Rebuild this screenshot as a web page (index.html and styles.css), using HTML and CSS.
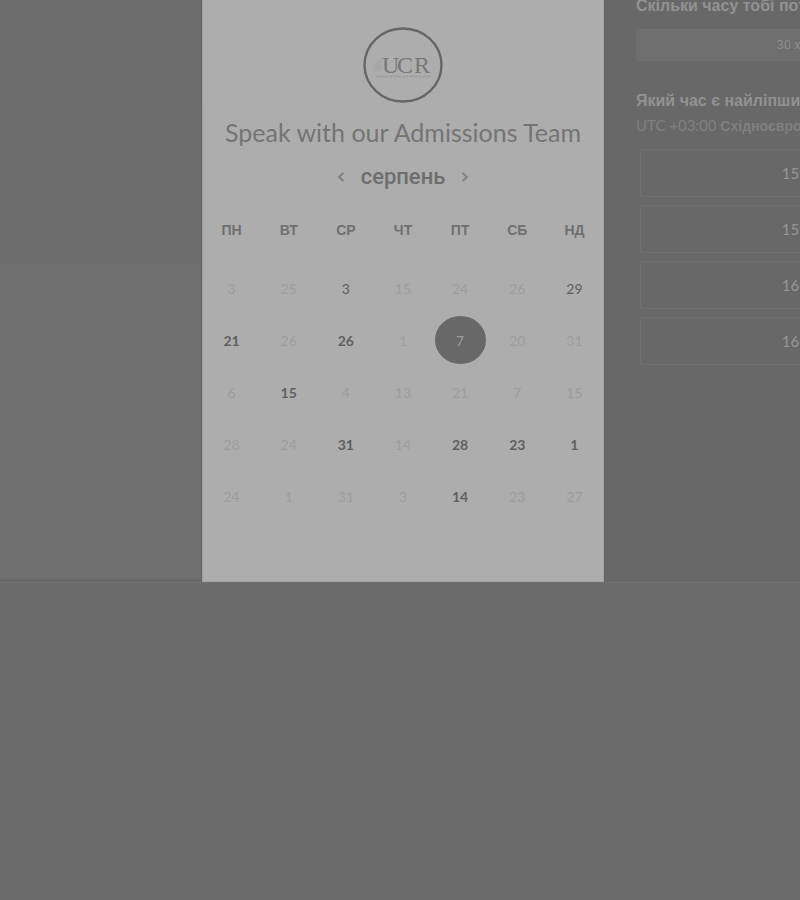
FILE: index.html
```html
<!DOCTYPE html>
<html lang="uk">
<head>
<meta charset="utf-8">
<meta name="viewport" content="width=device-width, initial-scale=1">
<title>Speak with our Admissions Team</title>
<link rel="stylesheet" href="styles.css">
</head>
<body>
<main class="scheduler">
  <section class="calendar">
    <svg class="logo" viewBox="0 0 80 76" role="img" aria-label="UCR">
      <ellipse cx="40" cy="38" rx="38.5" ry="36.5" fill="none" stroke="#666" stroke-width="2.4"/>
      <path d="M12 44V37l2-2v9M16 44V33l2-2v13" fill="none" stroke="#a3a3a3" stroke-width="1"/>
      <text class="logo-name" y="46"><tspan x="19">U</tspan><tspan x="34">C</tspan><tspan x="51">R</tspan></text>
      <path d="M13 49.500H68" stroke="#9b9b9b" stroke-width="1.5" stroke-dasharray="3 1 2 1 5 1"/>
    </svg>
    <h1 class="title">Speak with our Admissions Team</h1>
    <div class="month">
      <button class="arrow" type="button" aria-label="Попередній місяць"><svg viewBox="0 0 8 10"><path d="M6.500 1 2 5l4.500 4"/></svg></button>
      <h2 class="month-name">серпень</h2>
      <button class="arrow" type="button" aria-label="Наступний місяць"><svg viewBox="0 0 8 10"><path d="M1.500 1 6 5 1.500 9"/></svg></button>
    </div>
    <table class="days">
      <thead><tr><th>ПН</th><th>ВТ</th><th>СР</th><th>ЧТ</th><th>ПТ</th><th>СБ</th><th>НД</th></tr></thead>
      <tbody>
        <tr><td>3</td><td>25</td><td class="open">3</td><td>15</td><td>24</td><td>26</td><td class="open">29</td></tr>
        <tr><td class="open strong">21</td><td>26</td><td class="open strong">26</td><td>1</td><td><button class="selected" type="button">7</button></td><td>20</td><td>31</td></tr>
        <tr><td>6</td><td class="open strong">15</td><td>4</td><td>13</td><td>21</td><td>7</td><td>15</td></tr>
        <tr><td>28</td><td>24</td><td class="open strong">31</td><td>14</td><td class="open strong">28</td><td class="open strong">23</td><td class="open strong">1</td></tr>
        <tr><td>24</td><td>1</td><td>31</td><td>3</td><td class="open strong">14</td><td>23</td><td>27</td></tr>
      </tbody>
    </table>
  </section>
  <section class="times">
    <h2 class="question">Скільки часу тобі потрібно?</h2>
    <button class="duration" type="button">30 хв.</button>
    <h2 class="question">Який час є найліпшим?</h2>
    <p class="zone">UTC +03:00 <b>Східноєвропа</b></p>
    <div class="slots">
      <button class="slot" type="button">15:00</button>
      <button class="slot" type="button">15:30</button>
      <button class="slot" type="button">16:00</button>
      <button class="slot" type="button">16:30</button>
    </div>
  </section>
</main>
</body>
</html>
```
FILE: styles.css
```css
* { box-sizing: border-box; }

body {
  margin: 0;
  min-height: 100vh;
  background: #6b6b6b;
  font-family: Lato, "Liberation Sans", sans-serif;
  overflow-x: hidden;
}

h1, h2, p { margin: 0; }

button {
  padding: 0;
  font: inherit;
  cursor: pointer;
}

.scheduler {
  display: grid;
  grid-template-columns: 1fr 402px 196px;
  background: linear-gradient(#6d6d6d, #6f6f6f);
  border-bottom: 1px solid #717171;
  overflow: hidden;
}

.scheduler::before {
  content: "";
  border-right: 1px solid #656565;
  border-bottom: 3px solid #696969;
}

.calendar {
  display: flex;
  flex-direction: column;
  align-items: center;
  padding: 27px 0 58px;
  background: #adadad;
  border: solid #a3a3a3;
  border-width: 0 1px 1px;
}

.logo {
  width: 80px;
  height: 76px;
}

.logo-name {
  font-family: "Liberation Serif", serif;
  font-size: 24px;
  fill: #777;
}

.title {
  margin-top: 13px;
  color: #747474;
  font-size: 25px;
  font-weight: 400;
  line-height: 32px;
  white-space: nowrap;
}

.month {
  display: flex;
  align-items: center;
  gap: 16px;
  margin-top: 13px;
}

.month-name {
  color: #6e6e6e;
  font: 500 22px/32px Roboto, sans-serif;
}

.arrow {
  display: flex;
  border: 0;
  background: none;
}

.arrow svg {
  width: 8px;
  height: 10px;
  fill: none;
  stroke: #808080;
  stroke-width: 2;
}

.days {
  width: 100%;
  margin-top: 20px;
  border-collapse: collapse;
  table-layout: fixed;
  text-align: center;
}

.days th {
  height: 34px;
  padding: 0;
  color: #707070;
  font: 700 14px/16px "Liberation Sans", sans-serif;
}

.days thead::after {
  content: "";
  display: block;
  height: 15px;
}

.days td {
  height: 52px;
  padding: 0;
  color: #9d9d9d;
  font-size: 14px;
}

.days .open { color: #606060; }
.days .strong { font-weight: 700; }

.selected {
  width: 51px;
  height: 48px;
  border: 0;
  border-radius: 50%;
  background: #686868;
  color: #9c9c9c;
  vertical-align: middle;
}

.calendar { padding-bottom: 59px; }

.times {
  padding: 0 0 0 31px;
  background: #686868;
  border-left: 1px solid #636363;
}

.times > * { width: 316px; }

.question {
  color: #929292;
  font: 700 16px/22px "Liberation Sans", sans-serif;
  white-space: nowrap;
}

.question:first-child { margin-top: -5px; }

.duration {
  display: block;
  height: 32px;
  margin: 12px 0 29px;
  border: 1px solid #707070;
  border-radius: 2px;
  background: #6e6e6e;
  color: #8c8c8c;
  font: 13px/16px Roboto, sans-serif;
}

.zone {
  margin-top: 3px;
  color: #808080;
  font-size: 15px;
  line-height: 20px;
  white-space: nowrap;
}

.zone b { font: 700 14px/20px "Liberation Sans", sans-serif; }

.times .slots {
  display: grid;
  gap: 8px;
  width: 326px;
  margin-top: 13px;
  padding-left: 4px;
}

.slot {
  height: 48px;
  border: 1px solid #707070;
  border-radius: 2px;
  background: transparent;
  color: #979797;
  font-size: 15px;
}
```
